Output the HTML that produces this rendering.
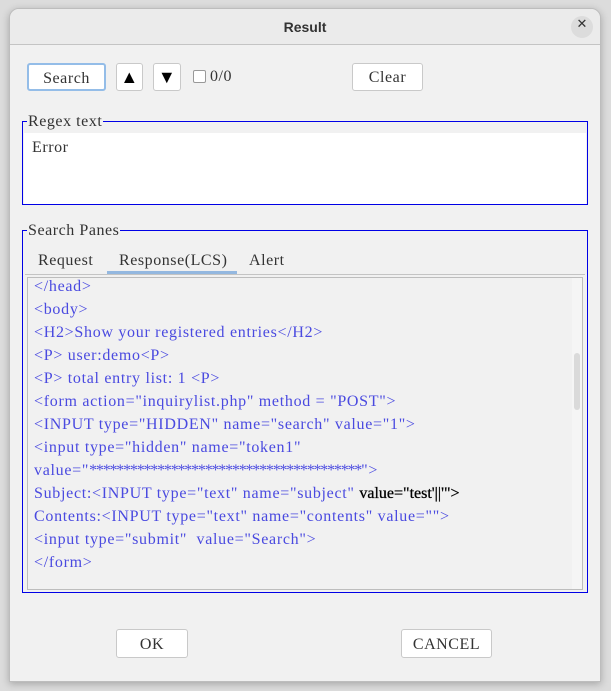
<!DOCTYPE html>
<html><head><style>
*{box-sizing:border-box;margin:0;padding:0}
body{width:611px;height:691px;background:#dcdcdc;position:relative;overflow:hidden;font-family:"Liberation Serif",serif;font-size:16px;letter-spacing:0.55px;color:#333}
.win{position:absolute;left:9px;top:8px;width:592px;height:674px;background:#f1f1f1;border:1px solid #bdbdbd;border-radius:10px 10px 0 0;box-shadow:0 2px 8px rgba(0,0,0,.25);overflow:hidden}
.title{height:36px;background:#ebebeb;border-bottom:1px solid #c4c4c4;text-align:center;font:bold 14px "Liberation Sans",sans-serif;letter-spacing:0;line-height:37px;color:#333}
.close{position:absolute;right:7px;top:7px;width:22px;height:22px;border-radius:50%;background:#dcdcdc;text-align:center;line-height:22px;font:13px "Liberation Sans",sans-serif;letter-spacing:0;color:#333}
.a{position:absolute}
.btn{position:absolute;background:#fff;border:1px solid #c9c9c9;border-radius:3px;text-align:center;color:#333}
.fs{position:absolute;border:1px solid #0000e6}
.lg{position:absolute;background:#f1f1f1;padding:0 1px;line-height:16px}
.code{position:absolute;left:34px;color:#4a4ae0;line-height:23px;white-space:pre;letter-spacing:0.7px}
</style></head><body>
<div class="win">
<div class="title">Result</div>
<div class="close">✕</div>
</div>
<div class="btn" style="left:27px;top:63px;width:79px;height:28px;line-height:27px;border:2px solid #94bde8">Search</div>
<div class="btn" style="left:116px;top:63px;width:27px;height:28px;line-height:26px;font-size:18px;color:#000">▲</div>
<div class="btn" style="left:153px;top:63px;width:28px;height:28px;line-height:26px;font-size:18px;color:#000">▼</div>
<div class="a" style="left:193px;top:70px;width:13px;height:13px;background:#fff;border:1px solid #999;border-radius:2px"></div>
<div class="a" style="left:210px;top:68px">0/0</div>
<div class="btn" style="left:352px;top:63px;width:71px;height:28px;line-height:28px">Clear</div>

<div class="fs" style="left:22px;top:121px;width:566px;height:84px"></div>
<div class="a" style="left:24px;top:133px;width:562px;height:71px;background:#fff"></div>
<div class="lg" style="left:27px;top:114px">Regex text</div>
<div class="a" style="left:32px;top:139px">Error</div>

<div class="fs" style="left:22px;top:230px;width:566px;height:363px"></div>
<div class="lg" style="left:27px;top:223px">Search Panes</div>
<div class="a" style="left:38px;top:252px">Request</div>
<div class="a" style="left:119px;top:252px">Response(LCS)</div>
<div class="a" style="left:249px;top:252px">Alert</div>
<div class="a" style="left:107px;top:271px;width:130px;height:3px;background:#94b8e0"></div>
<div class="a" style="left:25px;top:274px;width:560px;height:1px;background:#c4c4c4"></div>
<div class="a" style="left:27px;top:277px;width:556px;height:313px;border:1px solid #bdbdbd"></div>
<div class="a" style="left:572px;top:278px;width:10px;height:311px;background:#f5f5f5"></div>
<div class="a" style="left:574px;top:353px;width:6px;height:57px;background:#dadada;border-radius:3px"></div>
<div class="code" style="top:275px">&lt;/head&gt;
&lt;body&gt;
&lt;H2&gt;Show your registered entries&lt;/H2&gt;
&lt;P&gt; user:demo&lt;P&gt;
&lt;P&gt; total entry list: 1 &lt;P&gt;
&lt;form action="inquirylist.php" method = "POST"&gt;
&lt;INPUT type="HIDDEN" name="search" value="1"&gt;
&lt;input type="hidden" name="token1"
value="<span style="letter-spacing:-1.2px">****************************************</span>"&gt;
Subject:&lt;INPUT type="text" name="subject" <span style="color:#000;letter-spacing:0;-webkit-text-stroke:0.3px #000">value="test'||'"&gt;</span>
Contents:&lt;INPUT type="text" name="contents" value=""&gt;
&lt;input type="submit"  value="Search"&gt;
&lt;/form&gt;</div>

<div class="btn" style="left:116px;top:629px;width:72px;height:29px;line-height:29px">OK</div>
<div class="btn" style="left:401px;top:629px;width:91px;height:29px;line-height:29px">CANCEL</div>
</body></html>
